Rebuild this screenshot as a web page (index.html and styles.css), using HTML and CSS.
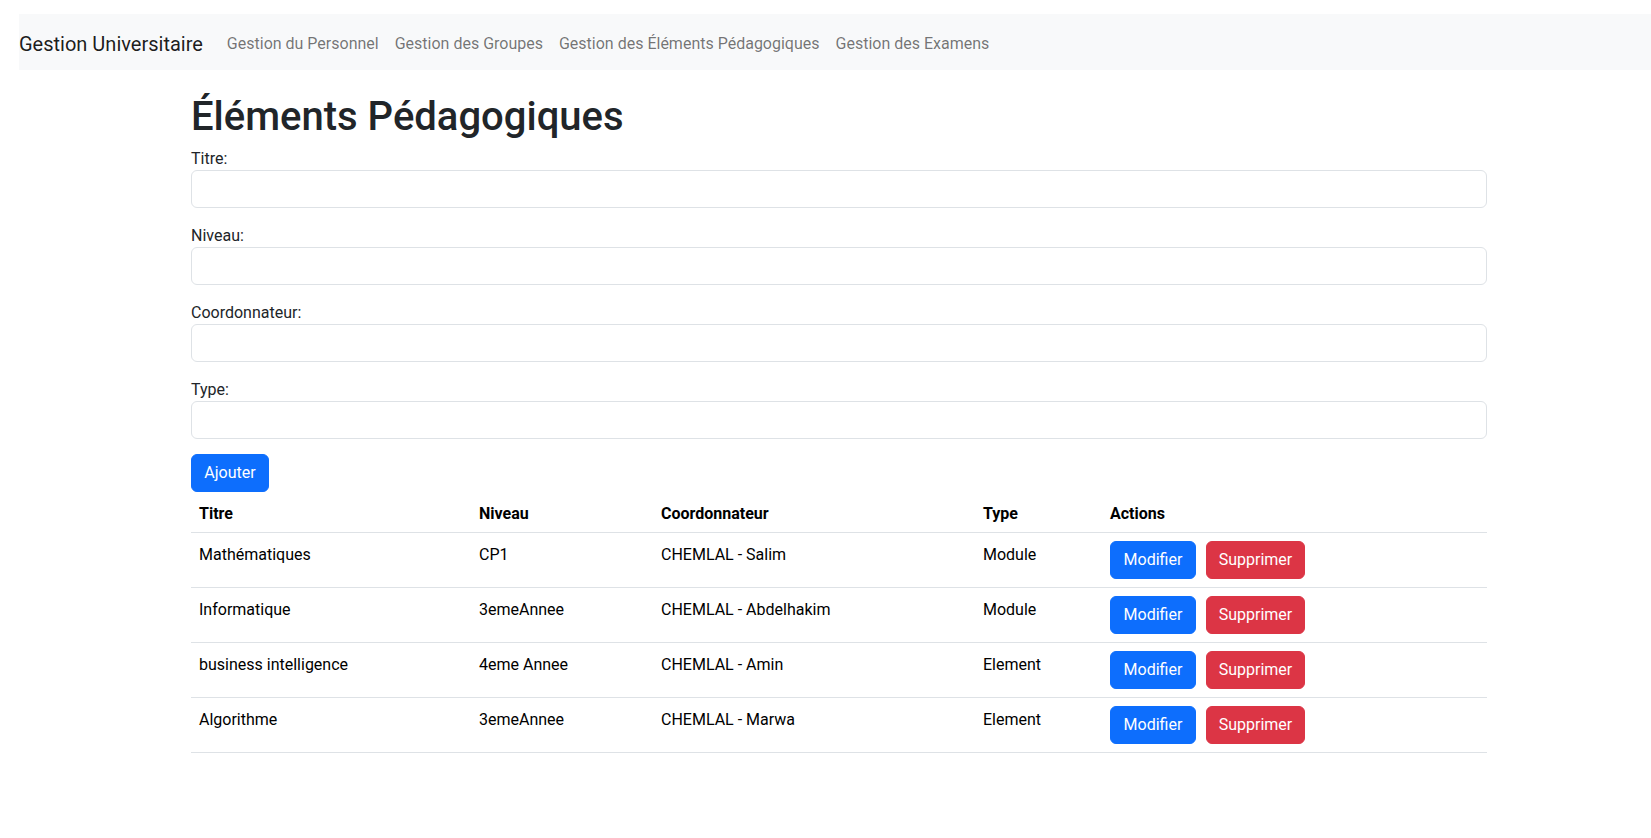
FILE: index.html
```html
<!DOCTYPE html>
<html lang="fr">
<head>
<meta charset="utf-8">
<title>Gestion Universitaire</title>
<link rel="stylesheet" href="styles.css">
</head>
<body>
<nav class="navbar">
  <a class="brand" href="#">Gestion Universitaire</a>
  <ul class="nav">
    <li><a class="nav-link" href="#">Gestion du Personnel</a></li>
    <li><a class="nav-link" href="#">Gestion des Groupes</a></li>
    <li><a class="nav-link" href="#">Gestion des Éléments Pédagogiques</a></li>
    <li><a class="nav-link" href="#">Gestion des Examens</a></li>
  </ul>
</nav>
<main class="container">
  <h1 class="title">Éléments Pédagogiques</h1>
  <form class="form">
    <div class="field">
      <label class="label" for="titre">Titre:</label>
      <input class="input" id="titre" type="text">
    </div>
    <div class="field">
      <label class="label" for="niveau">Niveau:</label>
      <input class="input" id="niveau" type="text">
    </div>
    <div class="field">
      <label class="label" for="coord">Coordonnateur:</label>
      <input class="input" id="coord" type="text">
    </div>
    <div class="field field-last">
      <label class="label" for="type">Type:</label>
      <input class="input" id="type" type="text">
    </div>
    <button type="button" class="btn btn-primary btn-add">Ajouter</button>
  </form>
  <table class="table">
    <colgroup>
      <col class="c-titre"><col class="c-niveau"><col class="c-coord"><col class="c-type"><col class="c-actions">
    </colgroup>
    <thead>
      <tr><th>Titre</th><th>Niveau</th><th>Coordonnateur</th><th>Type</th><th>Actions</th></tr>
    </thead>
    <tbody>
      <tr><td>Mathématiques</td><td>CP1</td><td>CHEMLAL - Salim</td><td>Module</td>
        <td><div class="actions"><button class="btn btn-primary btn-mod">Modifier</button><button class="btn btn-danger btn-sup">Supprimer</button></div></td></tr>
      <tr><td>Informatique</td><td>3emeAnnee</td><td>CHEMLAL - Abdelhakim</td><td>Module</td>
        <td><div class="actions"><button class="btn btn-primary btn-mod">Modifier</button><button class="btn btn-danger btn-sup">Supprimer</button></div></td></tr>
      <tr><td>business intelligence</td><td>4eme Annee</td><td>CHEMLAL - Amin</td><td>Element</td>
        <td><div class="actions"><button class="btn btn-primary btn-mod">Modifier</button><button class="btn btn-danger btn-sup">Supprimer</button></div></td></tr>
      <tr><td>Algorithme</td><td>3emeAnnee</td><td>CHEMLAL - Marwa</td><td>Element</td>
        <td><div class="actions"><button class="btn btn-primary btn-mod">Modifier</button><button class="btn btn-danger btn-sup">Supprimer</button></div></td></tr>
    </tbody>
  </table>
</main>
</body>
</html>
```
FILE: styles.css
```css
* { box-sizing: border-box; }
body {
  margin: 0;
  font-family: Roboto, "Liberation Sans", sans-serif;
  font-size: 16px;
  line-height: 1.5;
  color: #212529;
  background: #fff;
}
a { text-decoration: none; }

.navbar {
  margin: 14px 0 0 19px;
  height: 56px;
  padding: 10px 0 6px;
  background: #f8f9fa;
  display: flex;
  align-items: center;
}
.brand {
  font-size: 20px;
  line-height: 30px;
  padding: 5px 0;
  margin-right: 16px;
  color: rgba(0, 0, 0, 0.9);
  white-space: nowrap;
}
.nav {
  list-style: none;
  margin: 0;
  padding: 0;
  display: flex;
}
.nav-link {
  display: block;
  padding: 8px;
  line-height: 24px;
  color: rgba(0, 0, 0, 0.55);
  white-space: nowrap;
}

.container {
  width: 1296px;
  margin-left: 191px;
}
.title {
  margin: 23px 0 6px;
  font-size: 40px;
  font-weight: 500;
  line-height: 48px;
  color: #212529;
}
.form { display: flex; flex-direction: column; align-items: flex-start; }
.field { width: 100%; margin-bottom: 16px; }
.field-last { margin-bottom: 15px; }
.label { display: block; line-height: 23px; }
.input {
  display: block;
  width: 100%;
  height: 38px;
  padding: 6px 12px;
  font: inherit;
  color: #212529;
  background: #fff;
  border: 1px solid #dee2e6;
  border-radius: 6px;
}

.btn {
  display: inline-flex;
  align-items: center;
  justify-content: center;
  height: 38px;
  padding: 6px 12px;
  font: inherit;
  line-height: 24px;
  color: #fff;
  border: 1px solid transparent;
  border-radius: 6px;
  cursor: pointer;
}
.btn-primary { background: #0d6efd; border-color: #0d6efd; }
.btn-danger { background: #dc3545; border-color: #dc3545; }
.btn-add { width: 78px; }
.btn-mod { width: 86px; }
.btn-sup { width: 99px; }

.table {
  width: 100%;
  table-layout: fixed;
  border-collapse: collapse;
  color: #000;
  vertical-align: top;
}
.c-titre { width: 280px; }
.c-niveau { width: 182px; }
.c-coord { width: 322px; }
.c-type { width: 127px; }
.c-actions { width: 385px; }
.table th, .table td {
  padding: 10px 8px 6px;
  text-align: left;
  border-bottom: 1px solid #dee2e6;
  line-height: 24px;
}
.table th { font-weight: 700; vertical-align: bottom; }
.table td { vertical-align: top; }
.actions { display: flex; gap: 10px; margin: -2px 0 2px; }
```
